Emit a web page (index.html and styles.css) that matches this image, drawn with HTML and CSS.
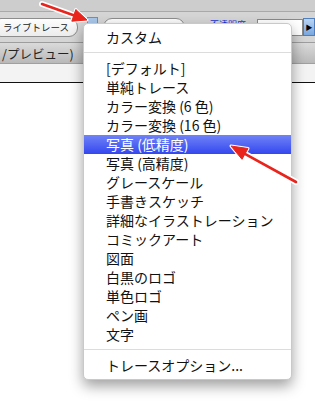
FILE: index.html
```html
<!DOCTYPE html>
<html lang="ja">
<head>
    <meta charset="UTF-8">
    <title>ライブトレース プリセット</title>
    <link rel="stylesheet" href="styles.css">
</head>
<body>

<div class="window">
    <div class="top-strip"></div>

    <div class="toolbar">
        <button class="pill pill-trace">ライブトレース</button>
        <span class="swatch"></span>
        <button class="pill pill-preset">カスタム</button>
        <span class="opacity-label">不透明度</span>
        <span class="field">100</span>
        <span class="field-arrow">▶</span>
    </div>

    <div class="view-bar">
        <span class="view-label">/プレビュー)</span>
    </div>
    <div class="panel"></div>
    <div class="canvas"></div>
</div>

<!-- Popup menu -->
<div class="menu">
    <div class="menu-item">カスタム</div>
    <div class="menu-sep"></div>
    <div class="menu-item">[デフォルト]</div>
    <div class="menu-item">単純トレース</div>
    <div class="menu-item">カラー変換 (6 色)</div>
    <div class="menu-item">カラー変換 (16 色)</div>
    <div class="menu-item selected">写真 (低精度)</div>
    <div class="menu-item">写真 (高精度)</div>
    <div class="menu-item">グレースケール</div>
    <div class="menu-item">手書きスケッチ</div>
    <div class="menu-item">詳細なイラストレーション</div>
    <div class="menu-item">コミックアート</div>
    <div class="menu-item">図面</div>
    <div class="menu-item">白黒のロゴ</div>
    <div class="menu-item">単色ロゴ</div>
    <div class="menu-item">ペン画</div>
    <div class="menu-item">文字</div>
    <div class="menu-sep"></div>
    <div class="menu-item">トレースオプション...</div>
</div>

<!-- Annotation arrows -->
<svg class="arrows" width="315" height="403" viewBox="0 0 315 403">
    <g fill="#fff" stroke="#fff" stroke-width="3" stroke-linejoin="round" stroke-linecap="round">
        <line x1="42" y1="4" x2="74" y2="15.3" stroke-width="6"/>
        <polygon points="87,20 71.8,21.2 75.8,9.5"/>
        <line x1="296" y1="182" x2="245" y2="153.8" stroke-width="6"/>
        <polygon points="231,146 248,148.5 242,159.3"/>
    </g>
    <g fill="#e8241c" stroke="#e8241c" stroke-width="1" stroke-linejoin="round">
        <line x1="42" y1="4" x2="75" y2="15.7" stroke-width="2.6" stroke-linecap="round"/>
        <polygon points="87,20 71.8,21.2 75.8,9.5"/>
        <line x1="296" y1="182" x2="244" y2="153.3" stroke-width="2.6" stroke-linecap="round"/>
        <polygon points="231,146 248,148.5 242,159.3"/>
    </g>
</svg>

</body>
</html>
```

FILE: styles.css
```css
body { margin: 0; background: #fff; font-family: "Noto Sans CJK JP", "DejaVu Sans", sans-serif; overflow: hidden; }

/* Fenêtre en arrière-plan */
.window { width: 315px; height: 403px; display: flex; flex-direction: column; }
.top-strip { height: 11px; background: #cdcdcd; border-bottom: 1px solid #a9a9a9; flex-shrink: 0; }

.toolbar { height: 30px; background: #d5d5d5; border-bottom: 1px solid #9d9d9d; display: flex; align-items: center; flex-shrink: 0; }
.toolbar > * { flex-shrink: 0; white-space: nowrap; }
.pill { font-family: inherit; font-size: 9.5px; color: #222; height: 19px; background: linear-gradient(#fdfdfd, #ececec); border: 1px solid #8d8d8d; border-radius: 9px; padding: 0; line-height: 16px; }
.pill-trace { width: 86px; margin-left: -8px; padding-left: 2px; }
.swatch { width: 9px; height: 10px; margin: -8px 0 0 9px; background: #a9c7ea; border: 1px solid #6f8fb6; }
.pill-preset { width: 82px; margin-left: 5px; }
.opacity-label { width: 36px; font-size: 9px; color: #1f33d6; text-decoration: underline; margin: -6px 0 0 25px; }
.field { width: 41px; height: 15px; margin-left: 11px; background: #fff; border: 1px solid #8a8a8a; font-size: 10px; line-height: 15px; padding-left: 3px; color: #111; }
.field-arrow { width: 10px; height: 16px; background: linear-gradient(#b9d4f2, #79a7de); border: 1px solid #4f7fbf; font-size: 7px; line-height: 16px; text-align: center; color: #000; }

.view-bar { height: 20px; background: linear-gradient(#dadada, #b9b9b9); border-bottom: 1px solid #a0a0a0; flex-shrink: 0; display: flex; align-items: center; }
.view-label { font-size: 12.5px; color: #222; margin-left: 2px; }
.panel { height: 18px; background: #f3f3f3; border-bottom: 1px solid #111; flex-shrink: 0; }
.canvas { flex-grow: 1; background: #fff; }

/* Menu déroulant */
.menu { position: absolute; left: 83px; top: 23px; width: 207px; padding: 4px 0; background: #fff; border: 1px solid #c9c9c9; border-radius: 5px; box-shadow: 0 6px 14px rgba(0,0,0,0.38); }
.menu-item { height: 19px; line-height: 19px; padding-left: 22px; font-size: 14px; color: #111; white-space: nowrap; }
.menu-item.selected { background: linear-gradient(#7083f7, #3447ef); color: #fff; }
.menu-sep { height: 1px; margin: 5px 0 6px; background: #dcdcdc; }

/* Flèches d'annotation */
.arrows { position: absolute; left: 0; top: 0; pointer-events: none; }
```
